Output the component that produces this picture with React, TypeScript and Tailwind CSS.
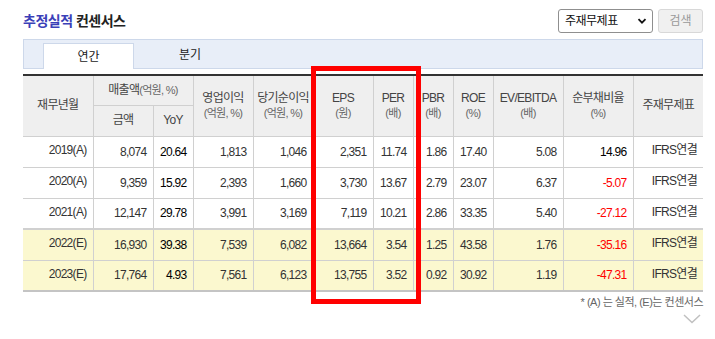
import React from 'react';

const font = { fontFamily: '"Liberation Sans", "Noto Sans CJK KR", sans-serif' };

type Row = {
  period: string;
  sales: string;
  yoy: string;
  op: string;
  net: string;
  eps: string;
  per: string;
  pbr: string;
  roe: string;
  ev: string;
  debt: string;
  est?: boolean;
};

const rows: Row[] = [
  { period: '2019(A)', sales: '8,074', yoy: '20.64', op: '1,813', net: '1,046', eps: '2,351', per: '11.74', pbr: '1.86', roe: '17.40', ev: '5.08', debt: '14.96' },
  { period: '2020(A)', sales: '9,359', yoy: '15.92', op: '2,393', net: '1,660', eps: '3,730', per: '13.67', pbr: '2.79', roe: '23.07', ev: '6.37', debt: '-5.07' },
  { period: '2021(A)', sales: '12,147', yoy: '29.78', op: '3,991', net: '3,169', eps: '7,119', per: '10.21', pbr: '2.86', roe: '33.35', ev: '5.40', debt: '-27.12' },
  { period: '2022(E)', sales: '16,930', yoy: '39.38', op: '7,539', net: '6,082', eps: '13,664', per: '3.54', pbr: '1.25', roe: '43.58', ev: '1.76', debt: '-35.16', est: true },
  { period: '2023(E)', sales: '17,764', yoy: '4.93', op: '7,561', net: '6,123', eps: '13,755', per: '3.52', pbr: '0.92', roe: '30.92', ev: '1.19', debt: '-47.31', est: true },
];

const widths = [70, 60, 40, 60, 60, 60, 40, 40, 40, 70, 70, 70];

const th = 'border border-[#d0d0d0] bg-[#efefef] font-normal text-[12px] leading-[15px] text-[#444] text-center align-middle p-0';
const td = 'border border-[#d0d0d0] text-[12px] text-[#333] text-right pr-[6px] align-middle';

const Unit = ({ children }: { children: React.ReactNode }) => (
  <div className="text-[11px] text-[#666] leading-[15px]">{children}</div>
);

export default function App() {
  return (
    <div className="w-[715px] h-[339px] bg-white pl-[23px] pr-[12px] relative" style={font}>
      <div className="flex items-center justify-between pt-[9px]">
        <div className="text-[14px] font-bold tracking-[-0.5px]">
          <span className="text-[#3a40b8]">추정실적</span> <span className="text-[#222]">컨센서스</span>
        </div>
        <div className="flex items-center gap-[5px]">
          <div className="w-[95px] h-[24px] border border-[#8f8f8f] rounded-[3px] bg-white flex items-center justify-between pl-[6px] pr-[5px] text-[12px] text-[#111] tracking-[-0.5px]">
            <span>주재무제표</span>
            <svg width="10" height="10" viewBox="0 0 10 10">
              <path d="M1.5 3.2 L5 6.7 L8.5 3.2" fill="none" stroke="#111" strokeWidth="1.8" />
            </svg>
          </div>
          <div className="w-[45px] h-[24px] border border-[#d8d8d8] rounded-[3px] bg-[#f0f0f0] flex items-center justify-center text-[12px] text-[#999]">
            검색
          </div>
        </div>
      </div>

      <div className="mt-[6px] h-[30px] bg-[#e8eef8] border border-[#cdd8ea] flex items-end pl-[19px]">
        <div className="w-[91px] h-[26px] bg-white border border-b-0 border-[#cdd8ea] -mb-px flex items-center justify-center text-[12px] text-[#222]">
          연간
        </div>
        <div className="w-[92px] ml-[10px] h-[26px] flex items-center justify-center text-[12px] text-[#222]">
          분기
        </div>
      </div>

      <table className="mt-[5px] w-[680px] table-fixed border-collapse border-t-2 border-t-[#333] border-b-2 border-b-[#c4c4c4] tracking-[-0.7px]">
        <colgroup>
          {widths.map((w, i) => (
            <col key={i} style={{ width: w }} />
          ))}
        </colgroup>
        <thead>
          <tr className="h-[30px]">
            <th rowSpan={2} className={`${th} border-l-0`}>재무년월</th>
            <th colSpan={2} className={th}>
              매출액<span className="text-[11px] text-[#666]">(억원, %)</span>
            </th>
            <th rowSpan={2} className={th}>영업이익<Unit>(억원, %)</Unit></th>
            <th rowSpan={2} className={th}>당기순이익<Unit>(억원, %)</Unit></th>
            <th rowSpan={2} className={th}>EPS<Unit>(원)</Unit></th>
            <th rowSpan={2} className={th}>PER<Unit>(배)</Unit></th>
            <th rowSpan={2} className={th}>PBR<Unit>(배)</Unit></th>
            <th rowSpan={2} className={th}>ROE<Unit>(%)</Unit></th>
            <th rowSpan={2} className={th}>EV/EBITDA<Unit>(배)</Unit></th>
            <th rowSpan={2} className={th}>순부채비율<Unit>(%)</Unit></th>
            <th rowSpan={2} className={`${th} border-r-0`}>주재무제표</th>
          </tr>
          <tr className="h-[31px]">
            <th className={th}>금액</th>
            <th className={th}>YoY</th>
          </tr>
        </thead>
        <tbody>
          {rows.map((r, i) => (
            <tr
              key={r.period}
              className={`h-[31px] ${r.est ? 'bg-[#fbf8cf]' : 'bg-white'} ${i === 3 ? 'border-t-2 border-t-[#d0d0d0]' : ''}`}
            >
              <td className={`${td} border-l-0 text-center pr-0 pb-[3px]`}>{r.period}</td>
              <td className={td}>{r.sales}</td>
              <td className={`${td} text-black`}>{r.yoy}</td>
              <td className={td}>{r.op}</td>
              <td className={td}>{r.net}</td>
              <td className={td}>{r.eps}</td>
              <td className={td}>{r.per}</td>
              <td className={td}>{r.pbr}</td>
              <td className={td}>{r.roe}</td>
              <td className={td}>{r.ev}</td>
              <td className={`${td} ${r.debt.startsWith('-') ? 'text-[#ff0000]' : 'text-black'}`}>{r.debt}</td>
              <td className={`${td} border-r-0 text-center pr-0 pb-[3px]`}>IFRS연결</td>
            </tr>
          ))}
        </tbody>
      </table>

      <div className="mt-[2px] text-right text-[11px] text-[#666] tracking-[-0.5px]">* (A) 는 실적, (E)는 컨센서스</div>
      <div className="flex justify-end pr-[2px] mt-[3px]">
        <svg width="18" height="10" viewBox="0 0 18 10">
          <path d="M1 1 L9 8.5 L17 1" fill="none" stroke="#c0c0c0" strokeWidth="1.5" />
        </svg>
      </div>

      <div className="absolute left-[311px] top-[66px] w-[110px] h-[238px] border-[5px] border-[#ff0000] pointer-events-none" />
    </div>
  );
}
